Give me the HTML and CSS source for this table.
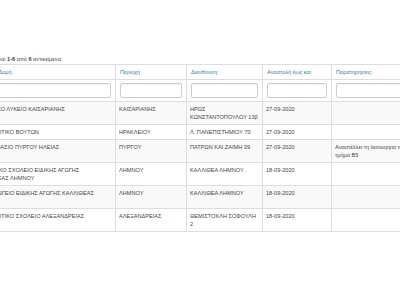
FILE: index.html
```html
<!DOCTYPE html>
<html lang="el">
<head>
<meta charset="utf-8">
<title>Αναστολές λειτουργίας</title>
<link rel="stylesheet" href="styles.css">
</head>
<body>
<div class="page">
  <div class="toolbar">
    <button class="btn" type="button">Εξαγωγή</button>
  </div>
  <div class="summary">Εμφανίζονται <b>1-6</b> από <b>6</b> αντικείμενα.</div>
  <table class="grid">
    <colgroup>
      <col class="c1"><col class="c2"><col class="c3"><col class="c4"><col class="c5"><col class="c6">
    </colgroup>
    <thead>
      <tr class="head">
        <th><a href="#">Σχολική Δομή</a></th>
        <th><a href="#">Περιοχή</a></th>
        <th><a href="#">Διεύθυνση</a></th>
        <th><a href="#">Αναστολή έως και</a></th>
        <th><a href="#">Παρατηρήσεις:</a></th>
        <th></th>
      </tr>
      <tr class="filters">
        <td><input class="fc" type="text"></td>
        <td><input class="fc" type="text"></td>
        <td><input class="fc" type="text"></td>
        <td><input class="fc" type="text"></td>
        <td><input class="fc" type="text"></td>
        <td></td>
      </tr>
    </thead>
    <tbody>
      <tr>
        <td class="name">1ο ΓΕΝΙΚΟ ΛΥΚΕΙΟ ΚΑΙΣΑΡΙΑΝΗΣ</td>
        <td>ΚΑΙΣΑΡΙΑΝΗΣ</td>
        <td>ΗΡΩΣ ΚΩΝΣΤΑΝΤΟΠΟΥΛΟΥ 13β</td>
        <td>27-09-2020</td>
        <td></td>
        <td></td>
      </tr>
      <tr>
        <td class="name">1ο ΔΗΜΟΤΙΚΟ ΒΟΥΤΩΝ</td>
        <td>ΗΡΑΚΛΕΙΟΥ</td>
        <td>Λ. ΠΑΝΕΠΙΣΤΗΜΙΟΥ 70</td>
        <td>27-09-2020</td>
        <td></td>
        <td></td>
      </tr>
      <tr>
        <td class="name">1ο ΓΥΜΝΑΣΙΟ ΠΥΡΓΟΥ ΗΛΕΙΑΣ</td>
        <td>ΠΥΡΓΟΥ</td>
        <td>ΠΑΤΡΩΝ ΚΑΙ ΖΑΙΜΗ 39</td>
        <td>27-09-2020</td>
        <td>Αναστέλλει τη λειτουργία το τμήμα Β5</td>
        <td></td>
      </tr>
      <tr>
        <td class="name">ΔΗΜΟΤΙΚΟ ΣΧΟΛΕΙΟ ΕΙΔΙΚΗΣ ΑΓΩΓΗΣ ΚΑΛΛΙΘΕΑΣ ΛΗΜΝΟΥ</td>
        <td>ΛΗΜΝΟΥ</td>
        <td>ΚΑΛΛΙΘΕΑ ΛΗΜΝΟΥ</td>
        <td>18-09-2020</td>
        <td></td>
        <td></td>
      </tr>
      <tr>
        <td class="name">ΝΗΠΙΑΓΩΓΕΙΟ ΕΙΔΙΚΗΣ ΑΓΩΓΗΣ ΚΑΛΛΙΘΕΑΣ (ΝΕΟ)</td>
        <td>ΛΗΜΝΟΥ</td>
        <td>ΚΑΛΛΙΘΕΑ ΛΗΜΝΟΥ</td>
        <td>18-09-2020</td>
        <td></td>
        <td></td>
      </tr>
      <tr>
        <td class="name">1ο ΔΗΜΟΤΙΚΟ ΣΧΟΛΕΙΟ ΑΛΕΞΑΝΔΡΕΙΑΣ</td>
        <td>ΑΛΕΞΑΝΔΡΕΙΑΣ</td>
        <td>ΘΕΜΙΣΤΟΚΛΗ ΣΟΦΟΥΛΗ 2</td>
        <td>18-09-2020</td>
        <td></td>
        <td></td>
      </tr>
    </tbody>
  </table>
</div>
</body>
</html>
```

FILE: styles.css
```css
html, body {
  margin: 0;
  padding: 0;
  background: #fff;
}
body {
  overflow: hidden;
}
.page {
  margin-left: -27px;
  width: 468px;
  padding-top: 41px;
  font-family: "Liberation Sans", Arial, sans-serif;
  font-size: 5.6px;
  line-height: 8px;
  color: #444;
}
.toolbar {
  display: flex;
  justify-content: flex-end;
  height: 14px;
}
.btn {
  box-sizing: border-box;
  width: 41px;
  height: 14px;
  padding: 0 4px;
  border: 1px solid #ccc;
  border-radius: 2px;
  background: #fff;
  color: #333;
  font-family: inherit;
  font-size: 5.6px;
}
.summary {
  height: 9px;
  line-height: 9px;
}
.summary b {
  font-weight: bold;
}
.grid {
  width: 100%;
  table-layout: fixed;
  border-collapse: collapse;
  border: 1px solid #ddd;
}
.c1 { width: 142px; }
.c2 { width: 71px; }
.c3 { width: 76px; }
.c4 { width: 69px; }
.c5 { width: 80px; }
.c6 { width: 30px; }
.grid th,
.grid td {
  border: 1px solid #ddd;
  padding: 3px 4px 3px 3px;
  text-align: left;
  vertical-align: top;
  font-weight: normal;
}
.grid td.name {
  padding-right: 8px;
}
.grid th {
  padding-left: 4px;
}
.grid th a {
  color: #337ab7;
  text-decoration: none;
}
.filters td {
  padding: 3px 4px;
}
.fc {
  display: block;
  box-sizing: border-box;
  width: 100%;
  height: 15px;
  margin: 0;
  border: 1px solid #ccc;
  border-radius: 2px;
  background: #fff;
  box-shadow: inset 0 1px 1px rgba(0, 0, 0, 0.06);
}
.grid tbody tr:nth-child(odd) td {
  background: #f9f9f9;
}
```
